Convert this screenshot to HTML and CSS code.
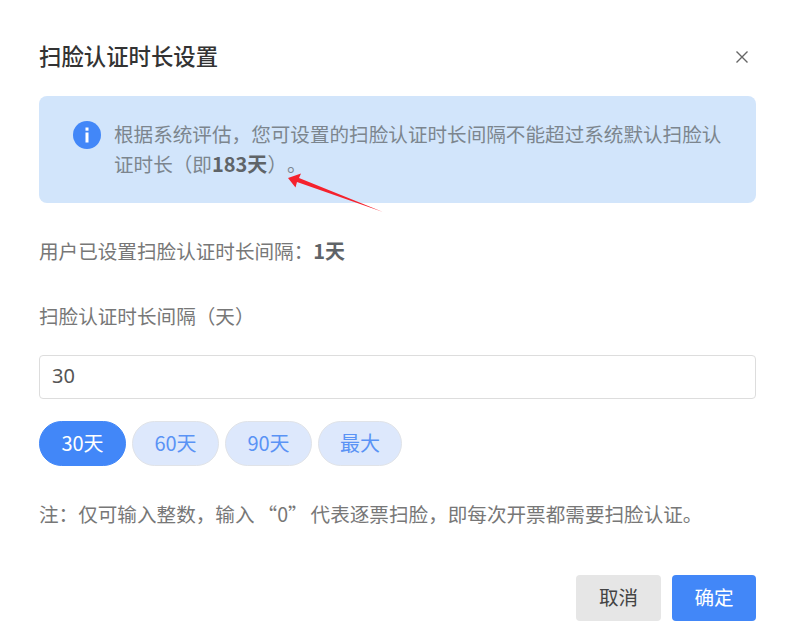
FILE: index.html
```html
<!DOCTYPE html>
<html lang="zh">
<head>
<meta charset="utf-8">
<title>扫脸认证时长设置</title>
<link rel="stylesheet" href="styles.css">
</head>
<body>
<div class="dialog">
  <header class="head">
    <h1 class="title">扫脸认证时长设置</h1>
    <svg class="close" width="14" height="14" viewBox="0 0 14 14"><path d="M1.5 1.5l11 11M12.5 1.5l-11 11" stroke="#666" stroke-width="1.4" fill="none"/></svg>
  </header>
  <div class="alert">
    <svg class="info" width="28" height="28" viewBox="0 0 28 28"><circle cx="14" cy="14" r="14" fill="#4287f8"/><rect x="12.5" y="6.5" width="3" height="3.2" fill="#fff"/><rect x="12.5" y="11.5" width="3" height="10" fill="#fff"/></svg>
    <p class="alert-text">根据系统评估，您可设置的扫脸认证时长间隔不能超过系统默认扫脸认证时长（即<b class="strong">183天</b>）。</p>
  </div>
  <p class="current">用户已设置扫脸认证时长间隔：<b class="strong">1天</b></p>
  <label class="label" for="days">扫脸认证时长间隔（天）</label>
  <input class="input" id="days" value="30">
  <div class="pills">
    <span class="pill active">30天</span>
    <span class="pill">60天</span>
    <span class="pill">90天</span>
    <span class="pill">最大</span>
  </div>
  <p class="note">注：仅可输入整数，输入<span class="quote-open">“</span>0<span class="quote-close">”</span>代表逐票扫脸，即每次开票都需要扫脸认证。</p>
  <footer class="foot">
    <button class="btn cancel">取消</button>
    <button class="btn ok">确定</button>
  </footer>
</div>
<svg class="arrow" width="110" height="50" viewBox="0 0 110 50"><path d="M3 8L16 3.5L14 8L98 42L12 12L10.5 17.5Z" fill="#f5222d"/></svg>
</body>
</html>
```
FILE: styles.css
```css
* { box-sizing: border-box; }
html, body { margin: 0; height: 100%; }
body {
  position: relative;
  background: #fff;
  font-family: "Noto Sans CJK SC", "Noto Sans", sans-serif;
  color: #666;
  overflow: hidden;
  text-spacing-trim: space-all;
}
.dialog { padding: 39px 36px 0 39px; width: 792px; height: 633px; }
.head { display: flex; justify-content: space-between; align-items: center; height: 34px; }
.title { margin: 0; padding-bottom: 2px; font-size: 22.4px; font-weight: 500; color: #333; line-height: 32px; }
.close { margin: 2px 7px 0 0; }
.alert {
  display: flex;
  margin-top: 23px;
  height: 107px;
  padding: 23px 30px 0 34px;
  background: #d2e5fb;
  border-radius: 8px;
}
.info { flex: none; margin-right: 13px; margin-top: 2px; }
.alert-text { margin: 0; font-size: 19.6px; line-height: 30px; color: #7c858e; }
.strong { font-weight: 700; font-size: 20px; color: #5f6468; }
.current { margin: 33px 0 0; font-size: 19.6px; line-height: 30px; color: #777; }
.label { display: block; margin-top: 35px; font-size: 19.6px; line-height: 30px; color: #777; }
.input {
  display: block;
  width: 717px;
  height: 44px;
  margin-top: 24px;
  padding: 0 12px 3px;
  border: 1px solid #ddd;
  border-radius: 4px;
  font: 20px "Noto Sans", sans-serif;
  color: #555;
  outline: none;
}
.pills { display: flex; gap: 6px; margin-top: 22px; }
.pill {
  display: flex;
  align-items: center;
  justify-content: center;
  height: 45px;
  width: 87px;
  padding-bottom: 2px;
  border: 1px solid #e0e3e8;
  border-radius: 23px;
  background: #dde8fc;
  color: #5a93f5;
  font-size: 20px;
}
.pill:last-child { width: 84px; }
.pill.active { background: #4287f8; border-color: #4287f8; color: #fff; }
.note { margin: 33px 0 0; font-size: 19.6px; line-height: 30px; color: #777; white-space: nowrap; }
.quote-open { padding-left: 3px; }
.quote-close { padding-right: 3px; }
.foot { display: flex; justify-content: flex-end; gap: 11px; margin-top: 46px; }
.btn {
  width: 84px;
  height: 46px;
  padding: 0 0 3px;
  border: 0;
  border-radius: 4px;
  font: 400 19.6px "Noto Sans CJK SC", sans-serif;
}
.cancel { width: 85px; background: #e6e6e6; color: #444; }
.ok { background: #4287f8; color: #fff; }
.arrow { position: absolute; left: 285px; top: 170px; }
```
